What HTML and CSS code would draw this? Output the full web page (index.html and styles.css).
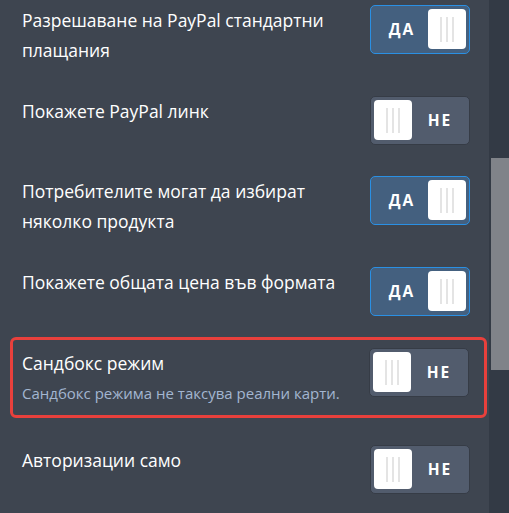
FILE: index.html
```html
<!DOCTYPE html>
<html lang="bg">
<head>
<meta charset="utf-8">
<title>PayPal настройки</title>
<link rel="stylesheet" href="styles.css">
</head>
<body>
<div class="app">
  <div class="viewport">
    <div class="list">
      <div class="row">
        <div class="text"><div class="label">Разрешаване на PayPal стандартни плащания</div></div>
        <div class="toggle on"><span class="state">ДА</span><span class="knob"><i></i><i></i><i></i></span></div>
      </div>
      <div class="row">
        <div class="text"><div class="label">Покажете PayPal линк</div></div>
        <div class="toggle off"><span class="knob"><i></i><i></i><i></i></span><span class="state">НЕ</span></div>
      </div>
      <div class="row">
        <div class="text"><div class="label">Потребителите могат да избират няколко продукта</div></div>
        <div class="toggle on"><span class="state">ДА</span><span class="knob"><i></i><i></i><i></i></span></div>
      </div>
      <div class="row">
        <div class="text"><div class="label">Покажете общата цена във формата</div></div>
        <div class="toggle on"><span class="state">ДА</span><span class="knob"><i></i><i></i><i></i></span></div>
      </div>
      <div class="row highlight">
        <div class="text">
          <div class="label">Сандбокс режим</div>
          <div class="desc">Сандбокс режима не таксува реални карти.</div>
        </div>
        <div class="toggle off"><span class="knob"><i></i><i></i><i></i></span><span class="state">НЕ</span></div>
      </div>
      <div class="row">
        <div class="text"><div class="label">Авторизации само</div></div>
        <div class="toggle off"><span class="knob"><i></i><i></i><i></i></span><span class="state">НЕ</span></div>
      </div>
    </div>
  </div>
  <div class="scrollbar"><div class="thumb"></div></div>
</div>
</body>
</html>
```

FILE: styles.css
```css
* { box-sizing: border-box; }
html, body { margin: 0; padding: 0; }
body {
  background: #3e4550;
  font-family: "Open Sans", "Noto Sans", sans-serif;
  color: #ffffff;
}
.app {
  display: flex;
  height: 513px;
  overflow: hidden;
}
.viewport {
  flex: 1;
  overflow: hidden;
}
.list {
  display: flex;
  flex-direction: column;
  gap: 31px;
  margin-top: 5px;
}
.row {
  display: flex;
  justify-content: space-between;
  align-items: flex-start;
  padding: 0 19px 0 22px;
}
.text {
  width: 330px;
}
.label {
  font-size: 17.5px;
  line-height: 30px;
  color: #ffffff;
}
.desc {
  font-size: 15px;
  line-height: 30px;
  color: #a3b6d1;
}
.row.highlight {
  margin: -10px 2px -4px 10px;
  border: 3px solid #e8403c;
  border-radius: 6px;
  padding: 8px 15px 7px 9px;
}
.toggle {
  flex: none;
  width: 100px;
  height: 49px;
  border-radius: 5px;
  border: 1px solid;
  padding: 3px;
  display: flex;
  align-items: flex-start;
}
.toggle.on {
  background: #44607f;
  border-color: #2a90e4;
}
.toggle.off {
  background: #525c6d;
  border-color: #363c46;
}
.state {
  flex: 1;
  text-align: center;
  font-weight: 700;
  font-size: 15.5px;
  letter-spacing: 2px;
  line-height: 41px;
  padding-left: 2px;
}
.knob {
  width: 38px;
  height: 40px;
  background: #ffffff;
  border-radius: 4px;
  display: flex;
  justify-content: center;
  gap: 4px;
  padding-top: 8px;
}
.knob i {
  display: block;
  width: 2px;
  height: 25px;
  background: #e4e4e4;
}
.scrollbar {
  flex: none;
  width: 20px;
  background: #333a45;
  padding-left: 2px;
}
.thumb {
  margin-top: 158px;
  height: 212px;
  background: #808389;
}
```
